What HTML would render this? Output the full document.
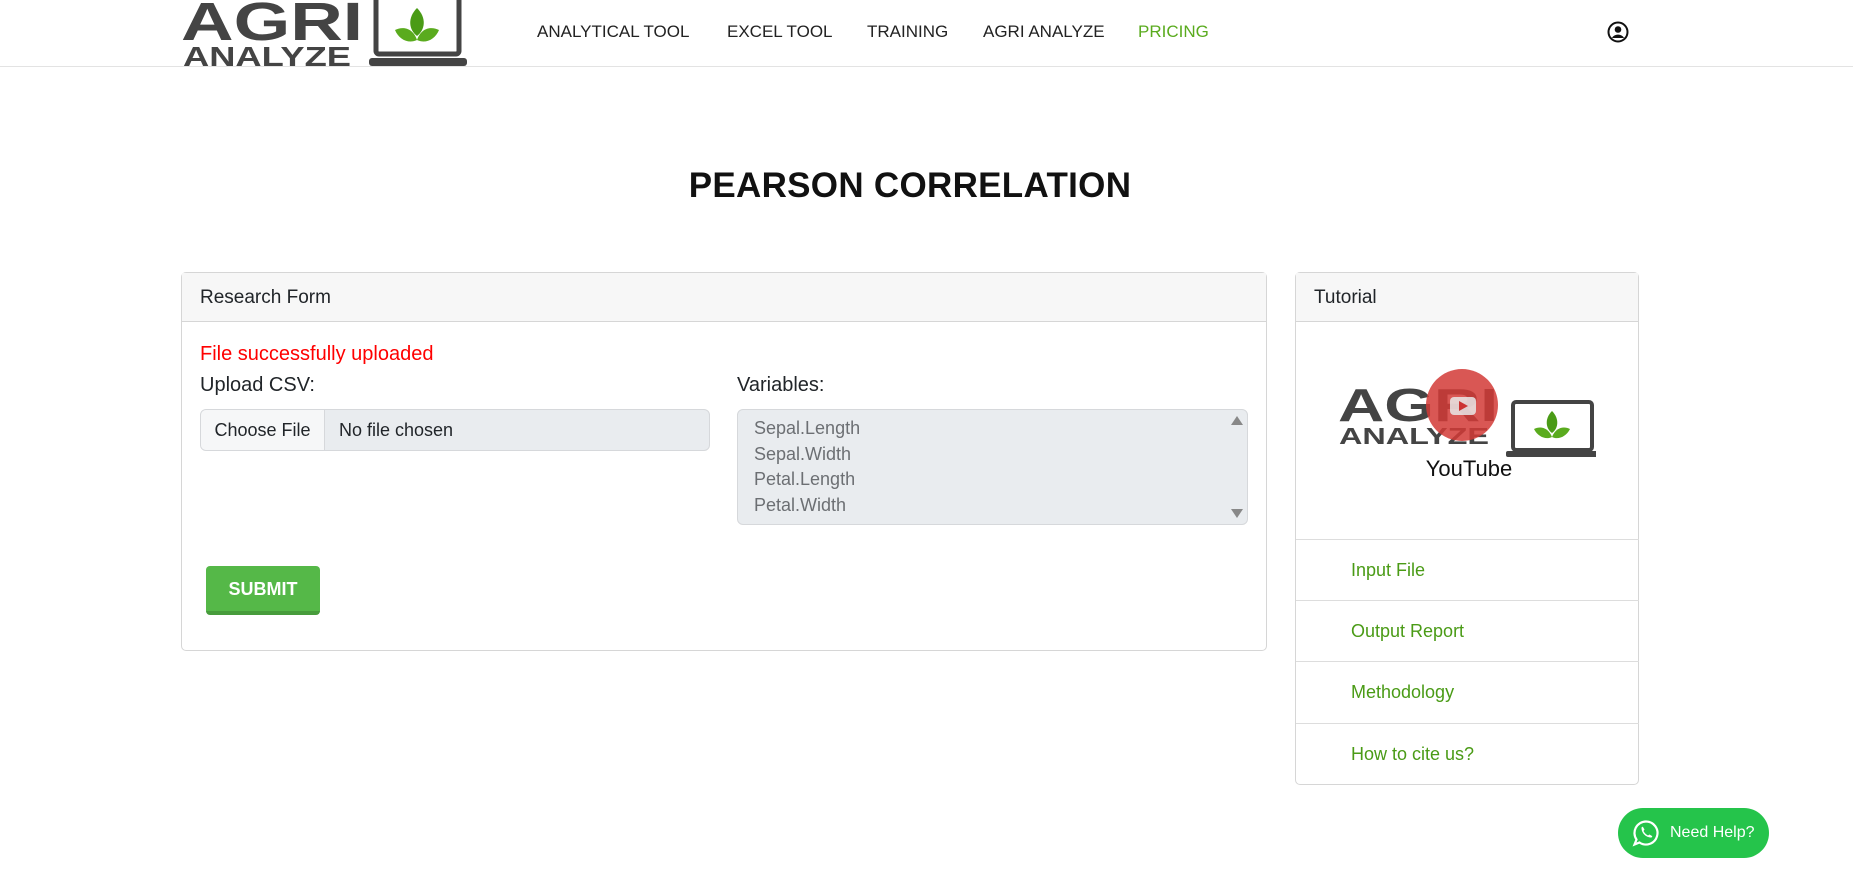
<!DOCTYPE html>
<html><head><meta charset="utf-8"><style>
*{box-sizing:border-box;margin:0;padding:0}
body{width:1853px;height:871px;overflow:hidden;background:#fff;font-family:"Liberation Sans",sans-serif;color:#212529;position:relative}
.abs{position:absolute}
.hdr{left:0;top:0;width:1853px;height:67px;border-bottom:1px solid #e3e3e3}
.nav{top:22px;font-size:17px;color:#222}
.card{border:1px solid #d6d6d6;border-radius:5px;background:#fff}
.ch{background:#f7f7f7;border-bottom:1px solid #d6d6d6;height:49px;font-size:19px;line-height:49px;padding-left:18px}
.li{left:0;width:343px;height:61px;border-top:1px solid #ddd;color:#4a9b16;font-size:18px;line-height:60px;padding-left:55px}
</style></head><body>
<div class="abs hdr"></div>
<svg class="abs" style="left:181px;top:0" width="286" height="68" viewBox="0 0 286 68">
<text x="0" y="40" font-family="Liberation Sans" font-weight="bold" font-size="54" fill="#444" textLength="182" lengthAdjust="spacingAndGlyphs">AGRI</text>
<text x="2" y="66" font-family="Liberation Sans" font-weight="bold" font-size="28" fill="#444" textLength="168" lengthAdjust="spacingAndGlyphs">ANALYZE</text>
<rect x="195" y="-4" width="83" height="58" rx="3" fill="none" stroke="#444" stroke-width="5"/>
<rect x="188" y="58" width="98" height="8" rx="3" fill="#444"/>
<path d="M236 8 C226 18 228 30 236 36 C244 30 246 18 236 8Z" fill="#4a9b16"/>
<path d="M236 40 C232 28 222 26 214 30 C218 40 228 44 236 40Z" fill="#5aab1e"/>
<path d="M236 40 C240 28 250 26 258 30 C254 40 244 44 236 40Z" fill="#5aab1e"/>
</svg>
<div class="abs nav" style="left:537px">ANALYTICAL TOOL</div>
<div class="abs nav" style="left:727px">EXCEL TOOL</div>
<div class="abs nav" style="left:867px">TRAINING</div>
<div class="abs nav" style="left:983px">AGRI ANALYZE</div>
<div class="abs nav" style="left:1138px;color:#5aab1e">PRICING</div>
<svg class="abs" style="left:1607px;top:21px" width="22" height="22" viewBox="0 0 22 22"><circle cx="11" cy="11" r="9.5" fill="none" stroke="#111" stroke-width="2"/><circle cx="11" cy="8.5" r="3.3" fill="#111"/><path d="M5 17 C7 12.5 15 12.5 17 17" fill="#111"/></svg>
<div class="abs" style="left:0;width:1820px;top:166px;text-align:center;font-size:35px;font-weight:bold;letter-spacing:0.3px;color:#111">PEARSON CORRELATION</div>

<div class="abs card" style="left:181px;top:272px;width:1086px;height:379px">
<div class="ch">Research Form</div>
<div class="abs" style="left:18px;top:70px;color:#f00;font-size:20px">File successfully uploaded</div>
<div class="abs" style="left:18px;top:101px;font-size:20px">Upload CSV:</div>
<div class="abs" style="left:18px;top:136px;width:510px;height:42px;border:1px solid #d6d8db;border-radius:6px;background:#e9ecef;overflow:hidden">
<div style="position:absolute;left:0;top:0;width:124px;height:40px;background:#f6f7f8;border-right:1px solid #d6d8db;font-size:18px;line-height:40px;text-align:center">Choose File</div>
<div style="position:absolute;left:138px;top:0;font-size:18px;line-height:40px">No file chosen</div></div>
<div class="abs" style="left:555px;top:101px;font-size:20px">Variables:</div>
<div class="abs" style="left:555px;top:136px;width:511px;height:116px;border:1px solid #d6d8db;border-radius:6px;background:#e9ecef;color:#6c6f73;font-size:18px;line-height:25.5px;padding:6px 0 0 16px">Sepal.Length<br>Sepal.Width<br>Petal.Length<br>Petal.Width
<div style="position:absolute;right:4px;top:6px;width:0;height:0;border:6px solid transparent;border-bottom:9px solid #888;border-top:0"></div>
<div style="position:absolute;right:4px;bottom:6px;width:0;height:0;border:6px solid transparent;border-top:9px solid #888;border-bottom:0"></div></div>
<div class="abs" style="left:24px;top:293px;width:114px;height:49px;background:#55b848;border-bottom:4px solid #479c3c;border-radius:4px;color:#fff;font-size:18px;font-weight:bold;line-height:46px;text-align:center">SUBMIT</div>
</div>

<div class="abs card" style="left:1295px;top:272px;width:344px;height:513px">
<div class="ch">Tutorial</div>
<svg class="abs" style="left:40px;top:96px" width="260" height="110" viewBox="0 0 260 110">
<text x="2" y="52" font-family="Liberation Sans" font-weight="bold" font-size="46" fill="#444" textLength="160" lengthAdjust="spacingAndGlyphs">AGRI</text>
<text x="3" y="75" font-family="Liberation Sans" font-weight="bold" font-size="23" fill="#444" textLength="150" lengthAdjust="spacingAndGlyphs">ANALYZE</text>
<rect x="177" y="33" width="79" height="48" rx="3" fill="none" stroke="#444" stroke-width="4"/>
<rect x="170" y="82" width="93" height="6" rx="2" fill="#444"/>
<path d="M216 42 C208 50 210 60 216 64 C222 60 224 50 216 42Z" fill="#4a9b16"/>
<path d="M216 68 C212 58 204 57 198 60 C202 68 210 71 216 68Z" fill="#5aab1e"/>
<path d="M216 68 C220 58 228 57 234 60 C230 68 222 71 216 68Z" fill="#5aab1e"/>
<circle cx="126" cy="36" r="36" fill="#d23a36" opacity="0.85"/>
<rect x="114" y="28" width="26" height="18" rx="4" fill="#e8e8e8" opacity="0.85"/>
<path d="M123 32 L132 37 L123 42Z" fill="#c33"/>
<text x="133" y="107" text-anchor="middle" font-family="Liberation Sans" font-size="22" fill="#111">YouTube</text>
</svg>
<div class="abs li" style="top:266px">Input File</div>
<div class="abs li" style="top:327px">Output Report</div>
<div class="abs li" style="top:388px">Methodology</div>
<div class="abs li" style="top:450px">How to cite us?</div>
</div>

<div class="abs" style="left:1618px;top:808px;width:151px;height:50px;border-radius:25px;background:#25c44b;color:#fff;font-size:16px;line-height:50px;padding-left:52px">Need Help?
<svg style="position:absolute;left:14px;top:11px" width="28" height="28" viewBox="0 0 28 28"><path d="M14 2.5 A11.5 11.5 0 1 1 7.5 23.5 L2.5 25.5 L4.5 20.5 A11.5 11.5 0 0 1 14 2.5Z" fill="none" stroke="#fff" stroke-width="2.2"/><path d="M9.5 9 C9.5 8 10.5 7.5 11 8 L12.5 10.5 L11.5 12 C12.5 14 14 15.5 16 16.5 L17.5 15.5 L20 17 C20.5 17.5 20 18.5 19 18.5 C14 18.5 9.5 14 9.5 9Z" fill="#fff"/></svg></div>
</body></html>
